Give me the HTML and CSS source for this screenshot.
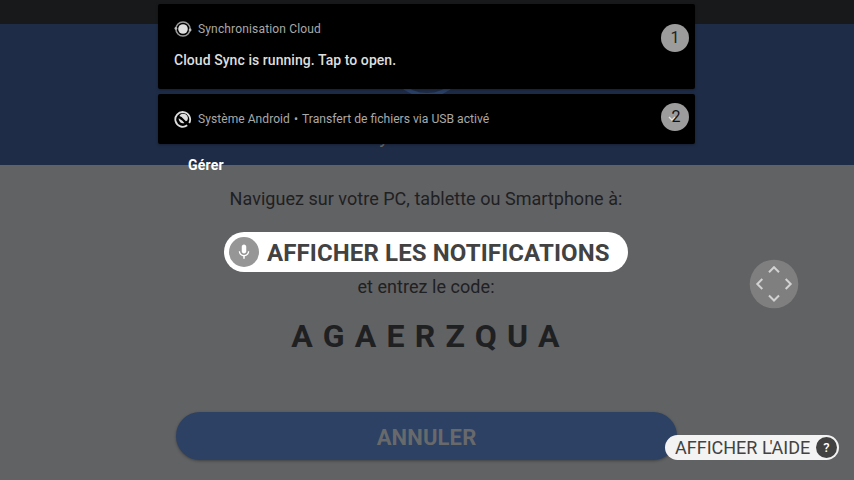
FILE: index.html
```html
<!DOCTYPE html>
<html lang="fr">
<head>
<meta charset="utf-8">
<title>Notifications</title>
<link rel="stylesheet" href="styles.css">
</head>
<body>
<div class="app">
  <div class="statusbar"></div>
  <header class="header">
    <svg class="logo" width="80" height="80" viewBox="0 0 80 80"><circle cx="40" cy="40" r="38" fill="none" stroke="#2a4169" stroke-width="4"/></svg>
    <span class="title">y</span>
  </header>
  <main class="main">
    <p class="line browse">Naviguez sur votre PC, tablette ou Smartphone à:</p>
    <p class="line enter">et entrez le code:</p>
    <p class="code">AGAERZQUA</p>
    <button class="cancel">ANNULER</button>
  </main>
</div>

<section class="shade">
  <article class="card tall">
    <div class="source">
      <svg width="18" height="18" viewBox="0 0 18 18"><circle cx="9" cy="9" r="4.800" fill="#dedede"/><circle cx="9" cy="9" r="7.100" fill="none" stroke="#999" stroke-width="1.500"/><circle cx="1.900" cy="8.400" r="1.400" fill="#bbb"/><circle cx="16.100" cy="10" r="1.400" fill="#bbb"/></svg>
      <span class="sync">Synchronisation Cloud</span>
    </div>
    <h2 class="message">Cloud Sync is running. Tap to open.</h2>
    <span class="badge">1</span>
  </article>
  <article class="card short">
    <div class="source">
      <svg width="18" height="18" viewBox="0 0 18 18" fill="none" stroke="#dedede"><path d="M13.200 15.300A7.400 7.400 0 1 1 15.200 13" stroke-width="1.800"/><path d="M5.400 6A4.500 4.500 0 0 1 13.300 10.500L11.900 11.300L7.600 7Z" fill="#dedede" stroke="none"/><path d="M4.700 8.300A4.400 4.400 0 0 0 10.300 13.100L8.400 10.800Z" fill="#dedede" stroke="none"/></svg>
      <span class="system">Système Android</span><span class="dot">•</span><span class="usb">Transfert de fichiers via USB activé</span>
    </div>
    <span class="badge"><svg class="chevron" width="8" height="6" viewBox="0 0 8 6"><path d="M1 1l3 3 3-3" fill="none" stroke="#e4e4e4" stroke-width="1.400"/></svg><span class="number">2</span></span>
  </article>
  <span class="manage">Gérer</span>
</section>

<div class="voice">
  <span class="mic"><svg width="18" height="18" viewBox="0 0 24 24" fill="#fff"><path d="M12 14c1.660 0 3-1.340 3-3V5c0-1.660-1.340-3-3-3S9 3.340 9 5v6c0 1.660 1.340 3 3 3zm5.300-3c0 3-2.540 5.100-5.300 5.100S6.700 14 6.700 11H5c0 3.410 2.720 6.230 6 6.720V21h2v-3.280c3.280-.48 6-3.300 6-6.720z"/></svg></span>
  <span class="voicetext">AFFICHER LES NOTIFICATIONS</span>
</div>
<svg class="dpad" width="50" height="50" viewBox="0 0 50 50"><circle cx="25" cy="25" r="24.300" fill="#7f7f7f"/><path d="M20 13.200l5-5 5 5M20 36.500l5 5 5-5M13.300 20l-5 5 5 5M36.700 20l5 5-5 5" fill="none" stroke="#d2d2d2" stroke-width="2"/></svg>
<div class="help"><span class="helptext">AFFICHER <span class="tight">L</span><span class="apostrophe">'</span>AIDE</span><span class="question">?</span></div>
</body>
</html>
```

FILE: styles.css
```css
* { box-sizing: border-box; }
body {
  margin: 0;
  width: 854px;
  height: 480px;
  overflow: hidden;
  position: relative;
  font-family: Roboto, sans-serif;
  background: #616264;
}
p, h2 { margin: 0; white-space: nowrap; }
svg { display: block; flex: none; }
span { white-space: nowrap; }

.app { height: 480px; display: flex; flex-direction: column; }
.statusbar { height: 24px; background: #18191b; }
.header {
  height: 141px;
  background: #1e2c47;
  display: flex;
  flex-direction: column;
  align-items: center;
}
.logo { margin-top: -7px; }
.title {
  font-size: 20px;
  line-height: 24px;
  margin: 27px 86px 0 0;
  color: #68696b;
}
.main {
  flex: 1;
  display: flex;
  flex-direction: column;
  align-items: center;
  padding-right: 2px;
  color: #1f2022;
}
.line { font-size: 18px; line-height: 24px; }
.browse { margin-top: 22px; letter-spacing: .03px; }
.enter { margin-top: 64px; letter-spacing: .05px; }
.code {
  margin-top: 17px;
  padding-left: 9px;
  font-size: 32px;
  line-height: 40px;
  font-weight: 700;
  letter-spacing: 10.250px;
}
.cancel {
  width: 501px;
  height: 48px;
  margin-top: 56px;
  padding: 3px 0 0 1px;
  border: 0;
  border-radius: 24px;
  background: #2c4163;
  color: #68696b;
  font: 700 22px/26px Roboto, sans-serif;
  letter-spacing: .15px;
  box-shadow: 0 1px 3px rgba(0, 0, 0, .35);
}

.shade {
  position: absolute;
  left: 158px;
  top: 4px;
  width: 537px;
  display: flex;
  flex-direction: column;
}
.card {
  position: relative;
  background: #000;
  border-radius: 2px;
  padding: 16px 16px 0;
  box-shadow: 0 1px 3px rgba(0, 0, 0, .3);
}
.tall { height: 85px; }
.short { height: 50px; margin-top: 5px; }
.source {
  display: flex;
  align-items: center;
  height: 18px;
  font-size: 12px;
  line-height: 18px;
  color: #a9a9a9;
}
.sync, .system { margin-left: 6px; }
.sync { letter-spacing: .16px; }
.system { letter-spacing: .07px; }
.usb { font-size: 12.150px; }
.dot { margin: 0 4px; }
.message {
  margin-top: 13px;
  font-size: 14px;
  line-height: 18px;
  font-weight: 500;
  letter-spacing: .06px;
  color: #dedede;
}
.badge {
  position: absolute;
  right: 6px;
  top: 20px;
  width: 28px;
  height: 28px;
  border-radius: 50%;
  background: #9c9c9c;
  color: #222;
  font-size: 16px;
  line-height: 28px;
  text-align: center;
}
.short .badge { top: 9px; }
.chevron { position: absolute; left: 7px; top: 13px; }
.number { position: relative; left: 1px; color: #111; }
.manage {
  margin: 12px 0 0 30px;
  font-size: 14px;
  line-height: 18px;
  font-weight: 700;
  letter-spacing: .2px;
  color: #fff;
}

.voice {
  position: absolute;
  left: 224px;
  top: 232px;
  width: 404px;
  height: 40px;
  border-radius: 20px;
  background: #fff;
  display: flex;
  align-items: center;
  padding-left: 5px;
}
.mic {
  width: 30px;
  height: 30px;
  border-radius: 50%;
  background: #969696;
  display: flex;
  align-items: center;
  justify-content: center;
}
.voicetext {
  margin: 2px 0 0 8px;
  font-size: 24px;
  line-height: 28px;
  font-weight: 700;
  letter-spacing: .12px;
  color: #424242;
}
.dpad { position: absolute; left: 749px; top: 259px; }
.help {
  position: absolute;
  left: 665px;
  top: 435px;
  width: 174px;
  height: 25px;
  border-radius: 13px;
  background: #f3f3f3;
  display: flex;
  align-items: center;
  justify-content: space-between;
  padding: 0 2px 0 10px;
}
.helptext { font-size: 18px; line-height: 24px; color: #424242; }
.tight { letter-spacing: -2.200px; }
.apostrophe { letter-spacing: -1px; }
.question {
  width: 21px;
  height: 21px;
  border-radius: 50%;
  background: #424242;
  color: #fff;
  font-size: 13px;
  line-height: 21px;
  font-weight: 500;
  text-align: center;
}
```
